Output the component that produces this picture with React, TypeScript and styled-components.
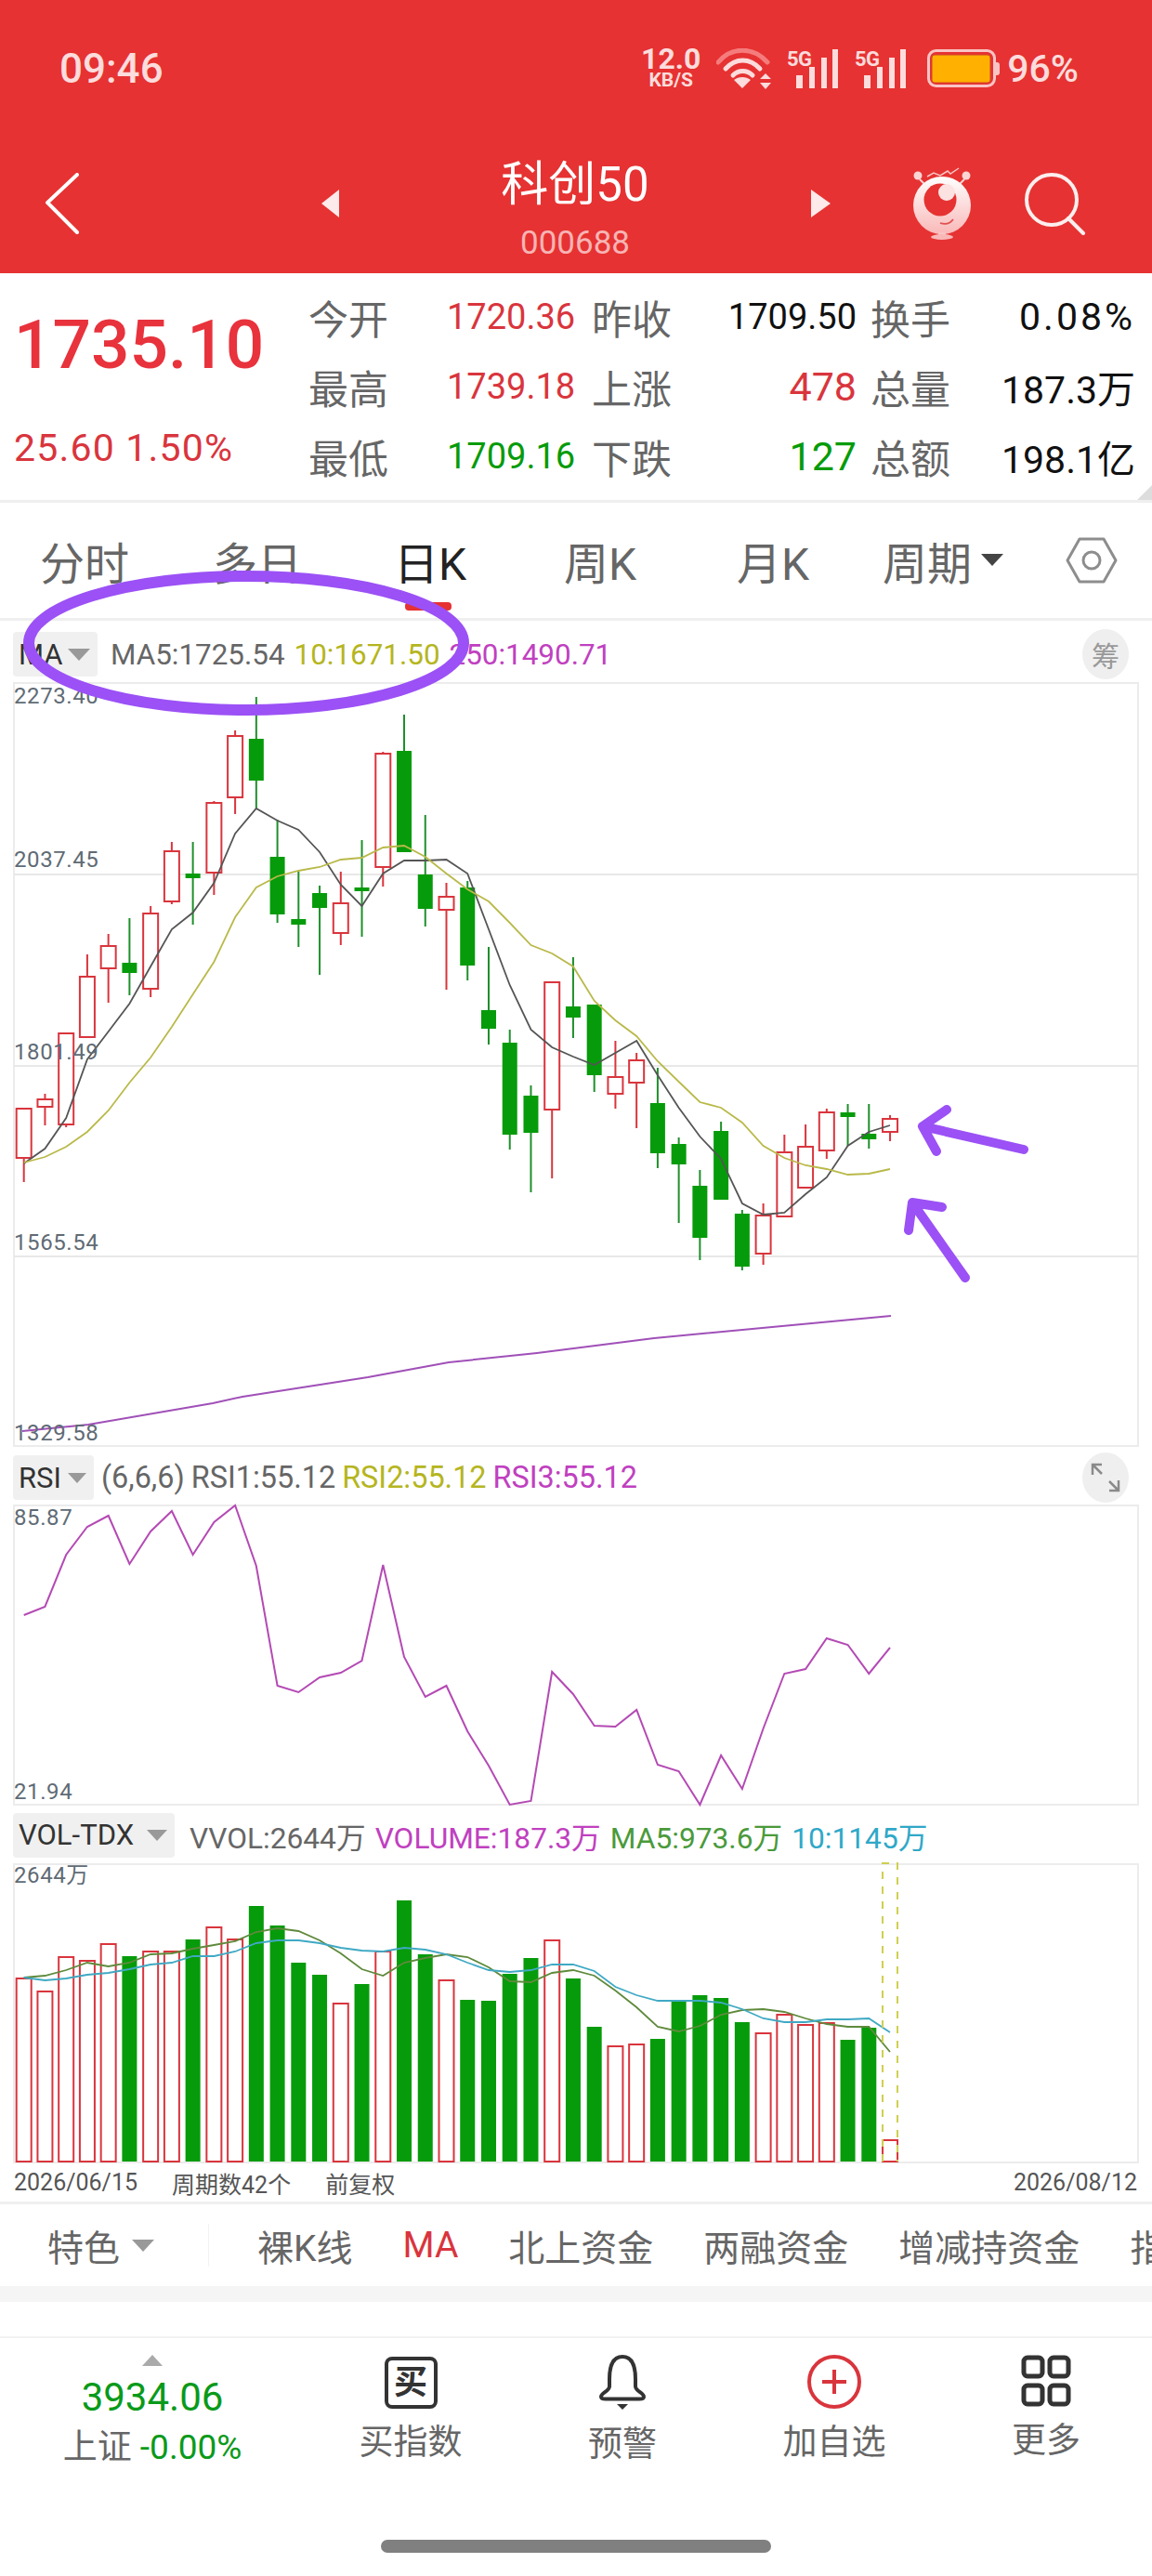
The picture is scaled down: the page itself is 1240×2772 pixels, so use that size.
import React from "react";
import styled, { createGlobalStyle } from "styled-components";

const GlobalStyle = createGlobalStyle`
  html, body {
    margin: 0;
    padding: 0;
    background: #fff;
  }
  * {
    box-sizing: border-box;
  }
`;

const RED = "#e63232";
const UP = "#d9353d";
const DOWN = "#069b0a";
const FONT = `Roboto, "Noto Sans CJK SC", sans-serif`;

const Page = styled.div`
  position: relative;
  width: 1240px;
  height: 2772px;
  overflow: hidden;
  background: #fff;
  font-family: ${FONT};
  color: #666;
`;

/* ---- header ---- */

const Header = styled.header`
  height: 294px;
  background: ${RED};
  color: #fff;
`;

const StatusBar = styled.div`
  display: flex;
  align-items: center;
  height: 144px;
  padding: 3px 79px 0 64px;
  color: #fcdcdc;
`;

const Clock = styled.div`
  font-size: 44px;
  font-weight: 500;
  margin-right: auto;
`;

const Speed = styled.div`
  display: flex;
  flex-direction: column;
  align-items: center;
  width: 62px;
  margin-right: 18px;
  font-weight: 700;
  span:first-child {
    font-size: 32px;
    line-height: 25px;
  }
  span:last-child {
    font-size: 21px;
    line-height: 21px;
  }
`;

const IconSlot = styled.span<{ $after: number }>`
  display: flex;
  margin-right: ${({ $after }) => $after}px;
`;

const Percent = styled.div`
  font-size: 41px;
  font-weight: 500;
  margin-left: 8px;
`;

const NavBar = styled.div`
  display: grid;
  grid-template-columns: 297px 19px 508px 110px 119px auto;
  align-items: center;
  height: 150px;
  padding-left: 49px;
`;

const TitleBlock = styled.div`
  display: flex;
  flex-direction: column;
  align-items: center;
  align-self: start;
  padding-top: 22px;
`;

const Title = styled.div`
  font-size: 51px;
  line-height: 66px;
`;

const Code = styled.div`
  font-size: 35px;
  line-height: 46px;
  margin-top: 7px;
  color: #f7b4b4;
`;

/* ---- quote ---- */

const Quote = styled.section`
  position: relative;
  display: flex;
  height: 247px;
  border-bottom: 3px solid #efefef;

  &::after {
    content: "";
    position: absolute;
    right: 0;
    bottom: 0;
    border-style: solid;
    border-width: 0 0 16px 16px;
    border-color: transparent transparent #ddd transparent;
  }
`;

const PriceBlock = styled.div`
  width: 332px;
  padding-left: 15px;
`;

const Price = styled.div`
  font-size: 73px;
  font-weight: 500;
  line-height: 86px;
  margin-top: 34px;
  color: #e8323c;
`;

const Change = styled.div`
  font-size: 41px;
  line-height: 48px;
  margin-top: 44px;
  letter-spacing: 1.2px;
  color: ${UP};
`;

const QuoteGrid = styled.div`
  display: grid;
  grid-template-columns: 149px 156px 100px 185px 100px 200px;
  grid-auto-rows: 75px;
  align-items: center;
  margin-top: 9px;
`;

const QuoteLabel = styled.div<{ $inset?: boolean }>`
  font-size: 43px;
  padding-left: ${({ $inset }) => ($inset ? "15px" : "0")};
  white-space: nowrap;
`;

const QuoteValue = styled.div<{ $color?: string; $right?: boolean; $size?: number; $spread?: number }>`
  font-size: ${({ $size = 38 }) => $size}px;
  letter-spacing: ${({ $spread = 0 }) => $spread}px;
  text-align: ${({ $right }) => ($right ? "right" : "left")};
  color: ${({ $color }) => $color || "#111"};
`;

/* ---- period tabs ---- */

const Tabs = styled.nav`
  display: grid;
  grid-template-columns: 186px 195px 183px 186px 157px 197px auto;
  align-items: center;
  height: 127px;
  padding: 0 0 1px 43px;
  border-bottom: 3px solid #efefef;
`;

const Tab = styled.div<{ $active?: boolean }>`
  position: relative;
  display: flex;
  align-items: center;
  gap: 10px;
  font-size: 48px;
  color: ${({ $active }) => ($active ? "#222" : "#666")};

  ${({ $active }) =>
    $active &&
    `&::after {
      content: "";
      position: absolute;
      left: 12px;
      bottom: -19px;
      width: 50px;
      height: 9px;
      border-radius: 4px;
      background: ${RED};
    }`}
`;

const Caret = styled.i<{ $size?: number; $color?: string; $up?: boolean }>`
  display: inline-block;
  flex: none;
  width: 0;
  height: 0;
  border-left: ${({ $size = 12 }) => $size}px solid transparent;
  border-right: ${({ $size = 12 }) => $size}px solid transparent;
  ${({ $up, $size = 12, $color = "#999" }) =>
    $up
      ? `border-bottom: ${$size * 1.15}px solid ${$color};`
      : `border-top: ${$size * 1.15}px solid ${$color};`}
`;

/* ---- chart legends ---- */

const Legend = styled.div<{ $height: number; $size?: number; $top?: number; $gap?: number }>`
  display: flex;
  align-items: center;
  height: ${({ $height }) => $height}px;
  padding: ${({ $top = 0 }) => $top}px 0 0 14px;
  gap: ${({ $gap = 10 }) => $gap}px;
  font-size: ${({ $size = 31.4 }) => $size}px;
  white-space: nowrap;
`;

const Chip = styled.div<{ $width: number; $after: number }>`
  display: flex;
  align-items: center;
  justify-content: space-between;
  width: ${({ $width }) => $width}px;
  height: 48px;
  margin-right: ${({ $after }) => $after}px;
  padding: 0 8px 0 6px;
  border-radius: 4px;
  background: #f0f0f0;
  color: #333;
  font-size: 31px;
`;

const Series = styled.span<{ $color?: string }>`
  color: ${({ $color }) => $color || "#666"};
`;

const RoundButton = styled.div`
  display: flex;
  align-items: center;
  justify-content: center;
  width: 50px;
  height: 54px;
  margin-left: auto;
  margin-right: 25px;
  border-radius: 50%;
  background: #efefef;
  color: #999;
  font-size: 30px;
`;

/* ---- charts ---- */

const ChartSvg = styled.svg`
  display: block;
  overflow: visible;
`;

const AxisText = styled.text`
  font-family: ${FONT};
  font-size: 24px;
  letter-spacing: 0.6px;
  fill: #5f6b75;
`;

const DateRow = styled.div`
  display: flex;
  align-items: center;
  height: 44px;
  padding: 0 16px 0 15px;
  gap: 37px;
  font-size: 25px;
  color: #555;
  border-bottom: 3px solid #efefef;

  span:last-child {
    margin-left: auto;
  }
`;

/* ---- feature tabs ---- */

const Features = styled.div`
  display: flex;
  align-items: center;
  height: 88px;
  padding-left: 51px;
  font-size: 39px;
  white-space: nowrap;
  overflow: hidden;
`;

const FeatureSelect = styled.div`
  display: flex;
  align-items: center;
  gap: 13px;
  height: 48px;
  width: 173px;
  flex: none;
`;

const FeatureDivider = styled.div`
  width: 1px;
  height: 46px;
  flex: none;
  background: #f2f2f2;
  margin-right: 52px;
`;

const FeatureList = styled.div`
  display: flex;
  align-items: center;
  gap: 54px;
`;

const Feature = styled.span<{ $active?: boolean }>`
  color: ${({ $active }) => ($active ? "#d9353d" : "#666")};
`;

const Band = styled.div`
  height: 17px;
  background: #f5f5f5;
`;

const Spacer = styled.div`
  height: 39px;
  border-bottom: 2px solid #f2f2f2;
`;

/* ---- bottom bar ---- */

const BottomBar = styled.footer`
  display: grid;
  grid-template-columns: 328px repeat(4, 228px);
  padding-top: 18px;
  height: 144px;
`;

const IndexBlock = styled.div`
  display: flex;
  flex-direction: column;
  align-items: center;
`;

const IndexValue = styled.div`
  font-size: 42px;
  line-height: 50px;
  margin-top: 9px;
  color: #0a9a1a;
`;

const IndexLine = styled.div`
  font-size: 37px;
  line-height: 50px;
  margin-top: 4px;

  span {
    color: #0a9a1a;
  }
`;

const Action = styled.div`
  display: flex;
  flex-direction: column;
  align-items: center;
  gap: 16px;
  font-size: 37px;
  line-height: 42px;
`;

const BuyIcon = styled.div`
  display: flex;
  align-items: center;
  justify-content: center;
  width: 57px;
  height: 56px;
  margin-top: 2px;
  border: 4px solid #333;
  border-radius: 8px;
  font-size: 36px;
  font-weight: 700;
  color: #333;
`;

const HomeIndicator = styled.div`
  width: 420px;
  height: 14px;
  margin: 73px auto 0;
  border-radius: 7px;
  background: #808080;
`;

/* overlay with the hand-drawn purple marks */
const Annotation = styled.svg`
  position: absolute;
  left: 0;
  top: 0;
  pointer-events: none;
`;

/* ---- data ---- */

const X = (i: number) => 25.7 + 22.74 * i;
const polyline = (ys: number[]) => ys.map((y, i) => `${X(i).toFixed(1)},${y}`).join(" ");

// wick top, body top, body bottom, wick bottom, up
type Candle = [number, number, number, number, boolean];
const candles: Candle[] = [
  [1193, 1193, 1246, 1272, true],
  [1177, 1183, 1191, 1211, true],
  [1112, 1112, 1210, 1213, true],
  [1027, 1051, 1116, 1116, true],
  [1005, 1018, 1042, 1079, true],
  [988, 1036, 1047, 1071, false],
  [975, 983, 1064, 1073, true],
  [906, 916, 970, 973, true],
  [906, 940, 945, 995, false],
  [862, 864, 939, 963, true],
  [786, 792, 858, 876, true],
  [750, 795, 840, 870, false],
  [882, 922, 984, 993, false],
  [938, 989, 995, 1019, false],
  [953, 961, 977, 1049, false],
  [938, 972, 1004, 1017, true],
  [904, 955, 959, 1008, false],
  [809, 811, 933, 954, true],
  [769, 808, 917, 917, false],
  [877, 941, 978, 997, false],
  [950, 965, 979, 1065, true],
  [948, 955, 1039, 1055, false],
  [1019, 1087, 1107, 1124, false],
  [1108, 1122, 1221, 1237, false],
  [1168, 1179, 1219, 1283, false],
  [1056, 1057, 1194, 1268, true],
  [1030, 1083, 1095, 1117, false],
  [1081, 1081, 1157, 1175, false],
  [1120, 1159, 1177, 1193, true],
  [1133, 1141, 1165, 1214, true],
  [1149, 1187, 1241, 1257, false],
  [1224, 1231, 1253, 1316, false],
  [1259, 1276, 1332, 1356, false],
  [1207, 1217, 1291, 1291, false],
  [1302, 1306, 1363, 1367, false],
  [1295, 1308, 1349, 1361, true],
  [1221, 1240, 1309, 1309, true],
  [1210, 1234, 1278, 1278, true],
  [1193, 1197, 1238, 1247, true],
  [1188, 1197, 1202, 1233, false],
  [1188, 1220, 1226, 1236, false],
  [1200, 1204, 1218, 1228, true],
];

const ma5 = [
  1252, 1236, 1203, 1140, 1110, 1080, 1040, 1000, 982, 950, 897, 870, 883, 893, 917, 952, 975, 940, 926, 926, 925,
  940, 1000, 1060, 1108, 1127, 1137, 1146, 1133, 1120, 1157, 1192, 1223, 1247, 1295, 1307, 1305, 1285, 1267, 1233,
  1218, 1211,
];
const ma10 = [
  1251, 1245, 1234, 1218, 1195, 1165, 1138, 1105, 1070, 1035, 987, 955, 943, 937, 933, 925, 923, 912, 910, 922, 940,
  957, 970, 993, 1017, 1026, 1040, 1077, 1098, 1115, 1142, 1164, 1186, 1192, 1208, 1233, 1246, 1254, 1258, 1264, 1263,
  1258,
];
const ma250 =
  "24,1540 95,1533 229,1510 261,1503 396,1482 483,1466 578,1456 704,1440 831,1428 959,1416";

const rsi = [
  595, 568, 400, 310, 273, 428, 325, 257, 400, 295, 240, 435, 822, 842, 795, 780, 740, 432, 728, 857, 823, 970, 1080,
  1205, 1193, 778, 848, 950, 955, 900, 1078, 1098, 1205, 1048, 1155, 960, 783, 768, 670, 690, 782, 700,
].map((z) => Math.round(1540 + z / 3));

// bar top, up
const volumes: [number, boolean][] = [
  [2129, true], [2143, true], [2106, true], [2110, true], [2092, true], [2105, false], [2100, true],
  [2100, true], [2087, false], [2074, true], [2087, true], [2051, false], [2072, false], [2112, false],
  [2125, false], [2156, true], [2135, false], [2100, true], [2045, false], [2103, false], [2131, true],
  [2152, false], [2153, false], [2124, false], [2107, false], [2088, true], [2129, false], [2181, false],
  [2202, true], [2200, true], [2194, false], [2153, false], [2147, false], [2150, false], [2176, false],
  [2188, true], [2168, true], [2179, true], [2177, true], [2195, false], [2182, false], [2303, true],
];

const volMa5 = [
  2128, 2126, 2120, 2112, 2116, 2112, 2103, 2102, 2097, 2093, 2089, 2079, 2075, 2078, 2088, 2102, 2119, 2126, 2112,
  2107, 2103, 2106, 2117, 2132, 2133, 2123, 2120, 2126, 2142, 2160, 2181, 2186, 2180, 2168, 2163, 2162, 2165, 2172,
  2178, 2181, 2181, 2208,
];
const volMa10 = [
  2128, 2131, 2129, 2125, 2123, 2119, 2114, 2112, 2105, 2105, 2100, 2091, 2088, 2088, 2091, 2096, 2099, 2100, 2096,
  2098, 2103, 2112, 2120, 2122, 2120, 2114, 2114, 2121, 2138, 2147, 2153, 2153, 2153, 2155, 2162, 2172, 2176, 2176,
  2173, 2173, 2172, 2187,
];

const quoteRows = [
  ["今开", "1720.36", UP, "昨收", "1709.50", "#111", "换手", "0.08%"],
  ["最高", "1739.18", UP, "上涨", "478", UP, "总量", "187.3万"],
  ["最低", "1709.16", DOWN, "下跌", "127", DOWN, "总额", "198.1亿"],
];

/* ---- drawings ---- */

const Signal: React.FC = () => (
  <svg width="56" height="44" viewBox="0 0 56 44">
    <text x="0" y="19" fontFamily="Roboto, sans-serif" fontWeight="700" fontSize="22" fill="#fcdcdc" textLength="27">
      5G
    </text>
    <g fill="#fcdcdc">
      <rect x="10" y="29" width="7" height="14" />
      <rect x="24" y="20" width="6" height="23" />
      <rect x="37" y="10" width="6" height="33" />
      <rect x="49" y="1" width="6" height="42" />
    </g>
  </svg>
);

const Wifi: React.FC = () => (
  <svg width="60" height="44" viewBox="0 0 60 44">
    <g fill="none" strokeLinecap="round" strokeWidth="5">
      <path d="M2 15 C16 -2 40 -2 55 15" stroke="#f57c7c" />
      <path d="M10 22 C21 10 36 10 47 22" stroke="#fcdcdc" />
      <path d="M18 29 C24 23 33 23 39 29" stroke="#fcdcdc" />
    </g>
    <path d="M28 43 L19 34 C24 30 32 30 37 34 Z" fill="#fcdcdc" />
    <path d="M53 27 L59 33 L47 33 Z M53 44 L47 37 L59 37 Z" fill="#fcdcdc" />
  </svg>
);

const Battery: React.FC = () => (
  <svg width="78" height="42" viewBox="0 0 78 42">
    <rect x="1.5" y="1.5" width="71" height="38" rx="8" fill="none" stroke="#f9c4c4" strokeWidth="3" />
    <rect x="5" y="6" width="63" height="30" rx="3" fill="#ffb000" stroke="#d2452a" strokeWidth="1" />
    <path d="M73 14 h2 a3 3 0 0 1 3 3 v8 a3 3 0 0 1 -3 3 h-2 Z" fill="#f9c4c4" />
  </svg>
);

const Mascot: React.FC = () => (
  <svg width="62" height="78" viewBox="0 0 62 78">
    <defs>
      <linearGradient id="mascotBody" x1="0" y1="0" x2="0" y2="1">
        <stop offset="0" stopColor="#ffffff" />
        <stop offset="1" stopColor="#f9b8b8" />
      </linearGradient>
    </defs>
    <path d="M15 10 L22 6 L29 9 L37 4 L40 7 L49 1" fill="none" stroke="#f9c4c4" strokeWidth="1.5" />
    <circle cx="5" cy="9" r="4.5" fill="#fbd4d4" />
    <circle cx="57" cy="9" r="4.5" fill="#fbd4d4" />
    <path d="M7 13 L14 20 M55 13 L48 20" stroke="#fbd4d4" strokeWidth="2" />
    <ellipse cx="31" cy="41" rx="31" ry="31" fill="url(#mascotBody)" />
    <circle cx="29" cy="35" r="17.5" fill="#e63232" />
    <circle cx="36" cy="27" r="9" fill="#fde2e2" />
    <path d="M29 60 C35 62 40 60 43 56" fill="none" stroke="#e05050" strokeWidth="1.8" />
    <rect x="27" y="70" width="8" height="4" fill="#f9c4c4" />
    <ellipse cx="31" cy="75" rx="12" ry="3" fill="#f9b8b8" />
  </svg>
);

const Hexagon: React.FC = () => (
  <svg width="56" height="50" viewBox="0 0 56 50">
    <path d="M2 25 L15 2 L41 2 L54 25 L41 48 L15 48 Z" fill="none" stroke="#8d8d8d" strokeWidth="3" strokeLinejoin="round" />
    <circle cx="28" cy="25" r="9" fill="none" stroke="#8d8d8d" strokeWidth="3" />
  </svg>
);

const ExpandIcon: React.FC = () => (
  <svg width="36" height="36" viewBox="0 0 36 36" fill="none" stroke="#8a8a8a" strokeWidth="2.5">
    <path d="M4 15 V4 H14 M4 4 L14 14" />
    <path d="M32 21 V32 H22 M32 32 L22 22" />
  </svg>
);

const PriceChart: React.FC = () => (
  <ChartSvg width={1240} height={823} viewBox="0 735 1240 823">
    <rect x="15" y="735" width="1210" height="821" fill="none" stroke="#ececec" strokeWidth="2" />
    {[941, 1147, 1352].map((y) => (
      <line key={y} x1="15" x2="1225" y1={y} y2={y} stroke="#e8e8e8" strokeWidth="2" />
    ))}
    {candles.map(([wt, bt, bb, wb, up], i) => {
      const x = X(i);
      return (
        <g key={i}>
          <line x1={x} x2={x} y1={wt} y2={wb} stroke={up ? UP : "#1f8f2b"} strokeWidth="2" />
          {up ? (
            <rect x={x - 8} y={bt} width="16" height={bb - bt} fill="#fff" stroke={UP} strokeWidth="2" />
          ) : (
            <rect x={x - 8} y={bt} width="16" height={bb - bt} fill={DOWN} />
          )}
        </g>
      );
    })}
    <polyline points={polyline(ma5)} fill="none" stroke="#555" strokeWidth="1.8" />
    <polyline points={polyline(ma10)} fill="none" stroke="#b9b94a" strokeWidth="1.8" />
    <polyline points={ma250} fill="none" stroke="#a050b8" strokeWidth="2" />
    <AxisText x="15" y="757">2273.40</AxisText>
    <AxisText x="15" y="933">2037.45</AxisText>
    <AxisText x="15" y="1140">1801.49</AxisText>
    <AxisText x="15" y="1345">1565.54</AxisText>
    <AxisText x="15" y="1550">1329.58</AxisText>
  </ChartSvg>
);

const RsiChart: React.FC = () => (
  <ChartSvg width={1240} height={323} viewBox="0 1620 1240 323">
    <rect x="15" y="1620" width="1210" height="322" fill="none" stroke="#ececec" strokeWidth="2" />
    <polyline points={polyline(rsi)} fill="none" stroke="#b44ab4" strokeWidth="2" />
    <AxisText x="15" y="1641">85.87</AxisText>
    <AxisText x="15" y="1936">21.94</AxisText>
  </ChartSvg>
);

const VolumeChart: React.FC = () => (
  <ChartSvg width={1240} height={322} viewBox="0 2006 1240 322">
    <rect x="15" y="2006" width="1210" height="321" fill="none" stroke="#ececec" strokeWidth="2" />
    {volumes.map(([top, up], i) =>
      up ? (
        <rect key={i} x={X(i) - 8} y={top} width="16" height={2326 - top} fill="#fff" stroke={UP} strokeWidth="2" />
      ) : (
        <rect key={i} x={X(i) - 8} y={top} width="16" height={2326 - top} fill={DOWN} />
      )
    )}
    <polyline points={polyline(volMa5)} fill="none" stroke="#5f8a3c" strokeWidth="1.8" />
    <polyline points={polyline(volMa10)} fill="none" stroke="#3fa9c4" strokeWidth="1.8" />
    <path
      d="M950 2326 V2005 H966 V2326"
      fill="none"
      stroke="#cfcf50"
      strokeWidth="2"
      strokeDasharray="8 8"
    />
    <AxisText x="15" y="2026">2644万</AxisText>
  </ChartSvg>
);

const App: React.FC = () => (
  <Page>
    <GlobalStyle />
    <Header>
      <StatusBar>
        <Clock>09:46</Clock>
        <Speed>
          <span>12.0</span>
          <span>KB/S</span>
        </Speed>
        <IconSlot $after={16}>
          <Wifi />
        </IconSlot>
        <IconSlot $after={17}>
          <Signal />
        </IconSlot>
        <IconSlot $after={22}>
          <Signal />
        </IconSlot>
        <Battery />
        <Percent>96%</Percent>
      </StatusBar>
      <NavBar>
        <svg width="36" height="66" viewBox="0 0 36 66" fill="none" stroke="#fff" strokeWidth="4" strokeLinecap="round">
          <path d="M34 2 L2 32 L34 64" />
        </svg>
        <svg width="19" height="30" viewBox="0 0 19 30">
          <path d="M19 0 V30 L0 15 Z" fill="#fdeaea" />
        </svg>
        <TitleBlock>
          <Title>科创50</Title>
          <Code>000688</Code>
        </TitleBlock>
        <svg width="21" height="30" viewBox="0 0 21 30">
          <path d="M0 0 V30 L21 15 Z" fill="#fdeaea" />
        </svg>
        <Mascot />
        <svg width="68" height="68" viewBox="0 0 68 68" fill="none" stroke="#fdeeee" strokeWidth="4" strokeLinecap="round">
          <circle cx="30" cy="30" r="27" />
          <path d="M48 50 L64 66" />
        </svg>
      </NavBar>
    </Header>

    <Quote>
      <PriceBlock>
        <Price>1735.10</Price>
        <Change>25.60 1.50%</Change>
      </PriceBlock>
      <QuoteGrid>
        {quoteRows.map((row) => (
          <React.Fragment key={row[0]}>
            <QuoteLabel>{row[0]}</QuoteLabel>
            <QuoteValue $color={row[2]}>{row[1]}</QuoteValue>
            <QuoteLabel>{row[3]}</QuoteLabel>
            <QuoteValue $color={row[5]} $right $size={row[4].length === 3 ? 43 : 38}>
              {row[4]}
            </QuoteValue>
            <QuoteLabel $inset>{row[6]}</QuoteLabel>
            <QuoteValue $right $size={41} $spread={row[7].endsWith("%") ? 3 : 0}>
              {row[7]}
            </QuoteValue>
          </React.Fragment>
        ))}
      </QuoteGrid>
    </Quote>

    <Tabs>
      <Tab>分时</Tab>
      <Tab>多日</Tab>
      <Tab $active>日K</Tab>
      <Tab>周K</Tab>
      <Tab>月K</Tab>
      <Tab>
        周期
        <Caret $size={12} $color="#444" />
      </Tab>
      <Hexagon />
    </Tabs>

    <Legend $height={67} $top={5}>
      <Chip $width={91} $after={4}>
        MA
        <Caret $size={12} />
      </Chip>
      <Series>MA5:1725.54</Series>
      <Series $color="#b5b520">10:1671.50</Series>
      <Series $color="#c040c0">250:1490.71</Series>
      <RoundButton>筹</RoundButton>
    </Legend>
    <PriceChart />

    <Legend $height={62} $size={32.4} $top={2} $gap={7}>
      <Chip $width={87} $after={1}>
        RSI
        <Caret $size={10} />
      </Chip>
      <Series>(6,6,6)</Series>
      <Series>RSI1:55.12</Series>
      <Series $color="#b5b520">RSI2:55.12</Series>
      <Series $color="#c040c0">RSI3:55.12</Series>
      <RoundButton>
        <ExpandIcon />
      </RoundButton>
    </Legend>
    <RsiChart />

    <Legend $height={63} $size={31.7}>
      <Chip $width={174} $after={6}>
        VOL-TDX
        <Caret $size={11} />
      </Chip>
      <Series>VVOL:2644万</Series>
      <Series $color="#c040c0">VOLUME:187.3万</Series>
      <Series $color="#4a9a3a">MA5:973.6万</Series>
      <Series $color="#2fa8c8">10:1145万</Series>
    </Legend>
    <VolumeChart />
    <DateRow>
      <span>2026/06/15</span>
      <span>周期数42个</span>
      <span>前复权</span>
      <span>2026/08/12</span>
    </DateRow>

    <Features>
      <FeatureSelect>
        特色
        <Caret $size={12} />
      </FeatureSelect>
      <FeatureDivider />
      <FeatureList>
        <Feature>裸K线</Feature>
        <Feature $active>MA</Feature>
        <Feature>北上资金</Feature>
        <Feature>两融资金</Feature>
        <Feature>增减持资金</Feature>
        <Feature>指标</Feature>
      </FeatureList>
    </Features>
    <Band />
    <Spacer />

    <BottomBar>
      <IndexBlock>
        <Caret $size={11} $color="#aaa" $up />
        <IndexValue>3934.06</IndexValue>
        <IndexLine>
          上证 <span>-0.00%</span>
        </IndexLine>
      </IndexBlock>
      <Action>
        <BuyIcon>买</BuyIcon>
        买指数
      </Action>
      <Action>
        <svg width="52" height="60" viewBox="0 0 52 60" fill="none" stroke="#333" strokeWidth="4" strokeLinejoin="round">
          <path d="M26 2 C15 2 12 14 12 26 V34 C12 39 3 41 3 45 C3 47 5 47.5 8 47.5 H44 C47 47.5 49 47 49 45 C49 41 40 39 40 34 V26 C40 14 37 2 26 2 Z" />
          <path d="M20 53 H32 L26 59 Z" fill="#333" stroke="none" />
        </svg>
        预警
      </Action>
      <Action>
        <svg width="60" height="58" viewBox="0 0 60 58" fill="none" stroke={UP} strokeWidth="4">
          <circle cx="30" cy="29" r="27" />
          <path d="M30 16 V42 M17 29 H43" />
        </svg>
        加自选
      </Action>
      <Action>
        <svg width="54" height="56" viewBox="0 0 54 56" fill="none" stroke="#333" strokeWidth="5">
          <rect x="3" y="3" width="20" height="20" rx="4" />
          <rect x="31" y="3" width="20" height="20" rx="4" />
          <rect x="3" y="33" width="20" height="20" rx="4" />
          <rect x="31" y="33" width="20" height="20" rx="4" />
        </svg>
        更多
      </Action>
    </BottomBar>
    <HomeIndicator />

    <Annotation width="1240" height="2772" viewBox="0 0 1240 2772" fill="none" stroke="#9b51f5" strokeLinecap="round" strokeLinejoin="round">
      <ellipse cx="265" cy="692" rx="234" ry="72" strokeWidth="12" />
      <path d="M1102 1237 L993 1212 M1019 1194 L993 1212 L1008 1239" strokeWidth="10" />
      <path d="M1039 1375 L982 1294 M1014 1299 L982 1294 L978 1324" strokeWidth="10" />
    </Annotation>
  </Page>
);

export default App;
